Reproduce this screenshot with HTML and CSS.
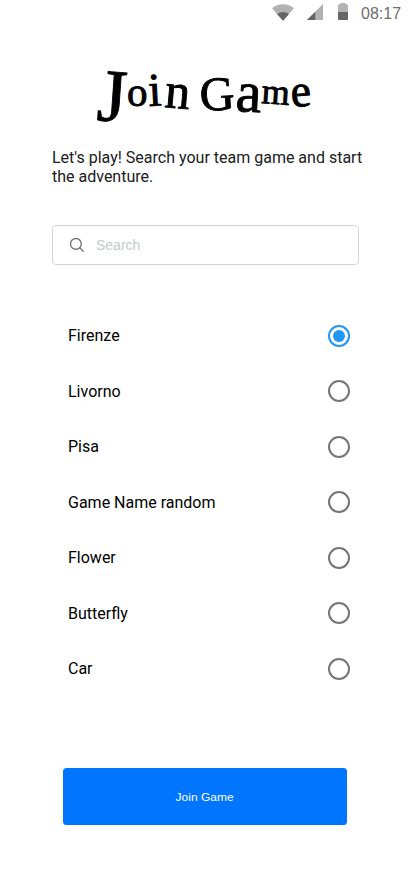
FILE: index.html
```html
<!DOCTYPE html>
<html lang="en">
<head>
<meta charset="utf-8">
<meta name="viewport" content="width=device-width, initial-scale=1">
<title>Join Game</title>
<link rel="stylesheet" href="styles.css">
</head>
<body>
<header class="status">
  <svg width="22" height="17" viewBox="0 0 22 17"><path fill="#b2b2b2" d="M0 4.2C6-1.1 16-1.1 22 4.2L11 16.8z"/><path fill="#656565" d="M5 10Q11 5.8 17 10L11 16.8z"/></svg>
  <svg class="signal" width="16" height="16" viewBox="0 0 16 16"><path fill="#b2b2b2" d="M16 0V16H0z"/><path fill="#656565" d="M8.3 7.7V16H0z"/></svg>
  <svg class="battery" width="10" height="17" viewBox="0 0 10 17"><path fill="#b2b2b2" d="M0 2.5Q0 1.3 1.2 1.3H2.5V0H7.5V1.3H8.8Q10 1.3 10 2.5V9H0z"/><path fill="#656565" d="M0 9H10V16Q10 17 9 17H1Q0 17 0 16z"/></svg>
  <time>08:17</time>
</header>
<main>
  <h1>
    <svg class="wordmark" width="220" height="70" viewBox="92 60 220 70"><text><tspan class="j" x="96" y="120" rotate="4">J</tspan><tspan class="o" x="127" y="106">o</tspan><tspan class="i" x="149" y="106" rotate="-3">i</tspan><tspan class="n" x="164" y="107" rotate="5">n</tspan><tspan> </tspan><tspan class="g" x="200.5" y="111" rotate="-3">G</tspan><tspan class="a" x="235" y="111" rotate="3">a</tspan><tspan class="m" x="261" y="103" rotate="4">m</tspan><tspan class="e" x="291.5" y="107" rotate="-4">e</tspan></text></svg>
  </h1>
  <p class="intro">Let's play! Search your team game and start the adventure.</p>
  <label class="search">
    <svg width="16" height="16" viewBox="0 0 16 16" fill="none" stroke="#72777a" stroke-width="1.4" stroke-linecap="round"><circle cx="6.9" cy="6.9" r="5.4"/><path d="M10.8 10.8L14.2 14.2"/></svg>
    <input type="text" placeholder="Search">
  </label>
  <div class="games">
    <label>Firenze<input type="radio" name="game" checked></label>
    <label>Livorno<input type="radio" name="game"></label>
    <label>Pisa<input type="radio" name="game"></label>
    <label>Game Name random<input type="radio" name="game"></label>
    <label>Flower<input type="radio" name="game"></label>
    <label>Butterfly<input type="radio" name="game"></label>
    <label>Car<input type="radio" name="game"></label>
  </div>
  <button><span>Join Game</span></button>
</main>
</body>
</html>
```

FILE: styles.css
```css
* { box-sizing: border-box; }
body {
  margin: 0;
  height: 869px;
  overflow: hidden;
  background: #fff;
  color: #000;
  font-family: Roboto, sans-serif;
}
svg { display: block; flex: none; }
.status {
  display: flex;
  height: 24px;
  padding: 4px 10px 0 272px;
}
.signal { margin-left: 13px; }
.battery { margin: -1px 0 0 15px; }
.status time {
  margin-left: 13px;
  color: #6e6e6e;
  font: 16px/19px "Liberation Sans", sans-serif;
}
main { padding: 36px 52px 0; }
h1 { margin: 0 0 0 40px; }
.wordmark { overflow: visible; }
.wordmark text {
  font-family: "Liberation Serif", serif;
  font-weight: 400;
  stroke: #000;
  stroke-width: 0.9px;
}
.wordmark .j { font-size: 75px; }
.wordmark .o { font-size: 41px; }
.wordmark .i { font-size: 47px; }
.wordmark .n { font-size: 50px; }
.wordmark .g { font-size: 48px; }
.wordmark .a { font-size: 58px; }
.wordmark .m { font-size: 36px; }
.wordmark .e { font-size: 46px; }
.intro {
  width: 320px;
  margin: 18px 0 0;
  color: #202020;
  font-size: 16px;
  line-height: 19px;
}
.search {
  display: flex;
  align-items: center;
  width: 307px;
  height: 40px;
  margin-top: 39px;
  padding-left: 16px;
  border: 1px solid #d2d5d8;
  border-radius: 4px;
}
.search input {
  width: 220px;
  margin-left: 11px;
  padding: 0;
  border: 0;
  outline: 0;
  background: none;
  font: 14px/20px "Liberation Sans", sans-serif;
}
.search input::placeholder { color: #c3cac9; opacity: 1; }
.games {
  display: grid;
  grid-auto-rows: 55.5px;
  width: 298px;
  margin-top: 43px;
  padding-left: 16px;
}
.games label {
  display: flex;
  align-items: center;
  justify-content: space-between;
  font-size: 16px;
}
.games input {
  appearance: none;
  width: 22px;
  height: 22px;
  margin: 0;
  padding: 3px;
  border: 2px solid #757575;
  border-radius: 50%;
}
.games input:checked {
  border-color: #2196f3;
  background: #2196f3 content-box;
}
button {
  display: block;
  width: 284px;
  height: 57px;
  margin: 71.5px 0 0 11px;
  padding: 0;
  border: 0;
  border-radius: 3.5px;
  background: #0075ff;
  color: #fff;
  font: 11px "Liberation Sans", sans-serif;
}
button span {
  display: inline-block;
  transform: scaleX(1.09);
}
```
